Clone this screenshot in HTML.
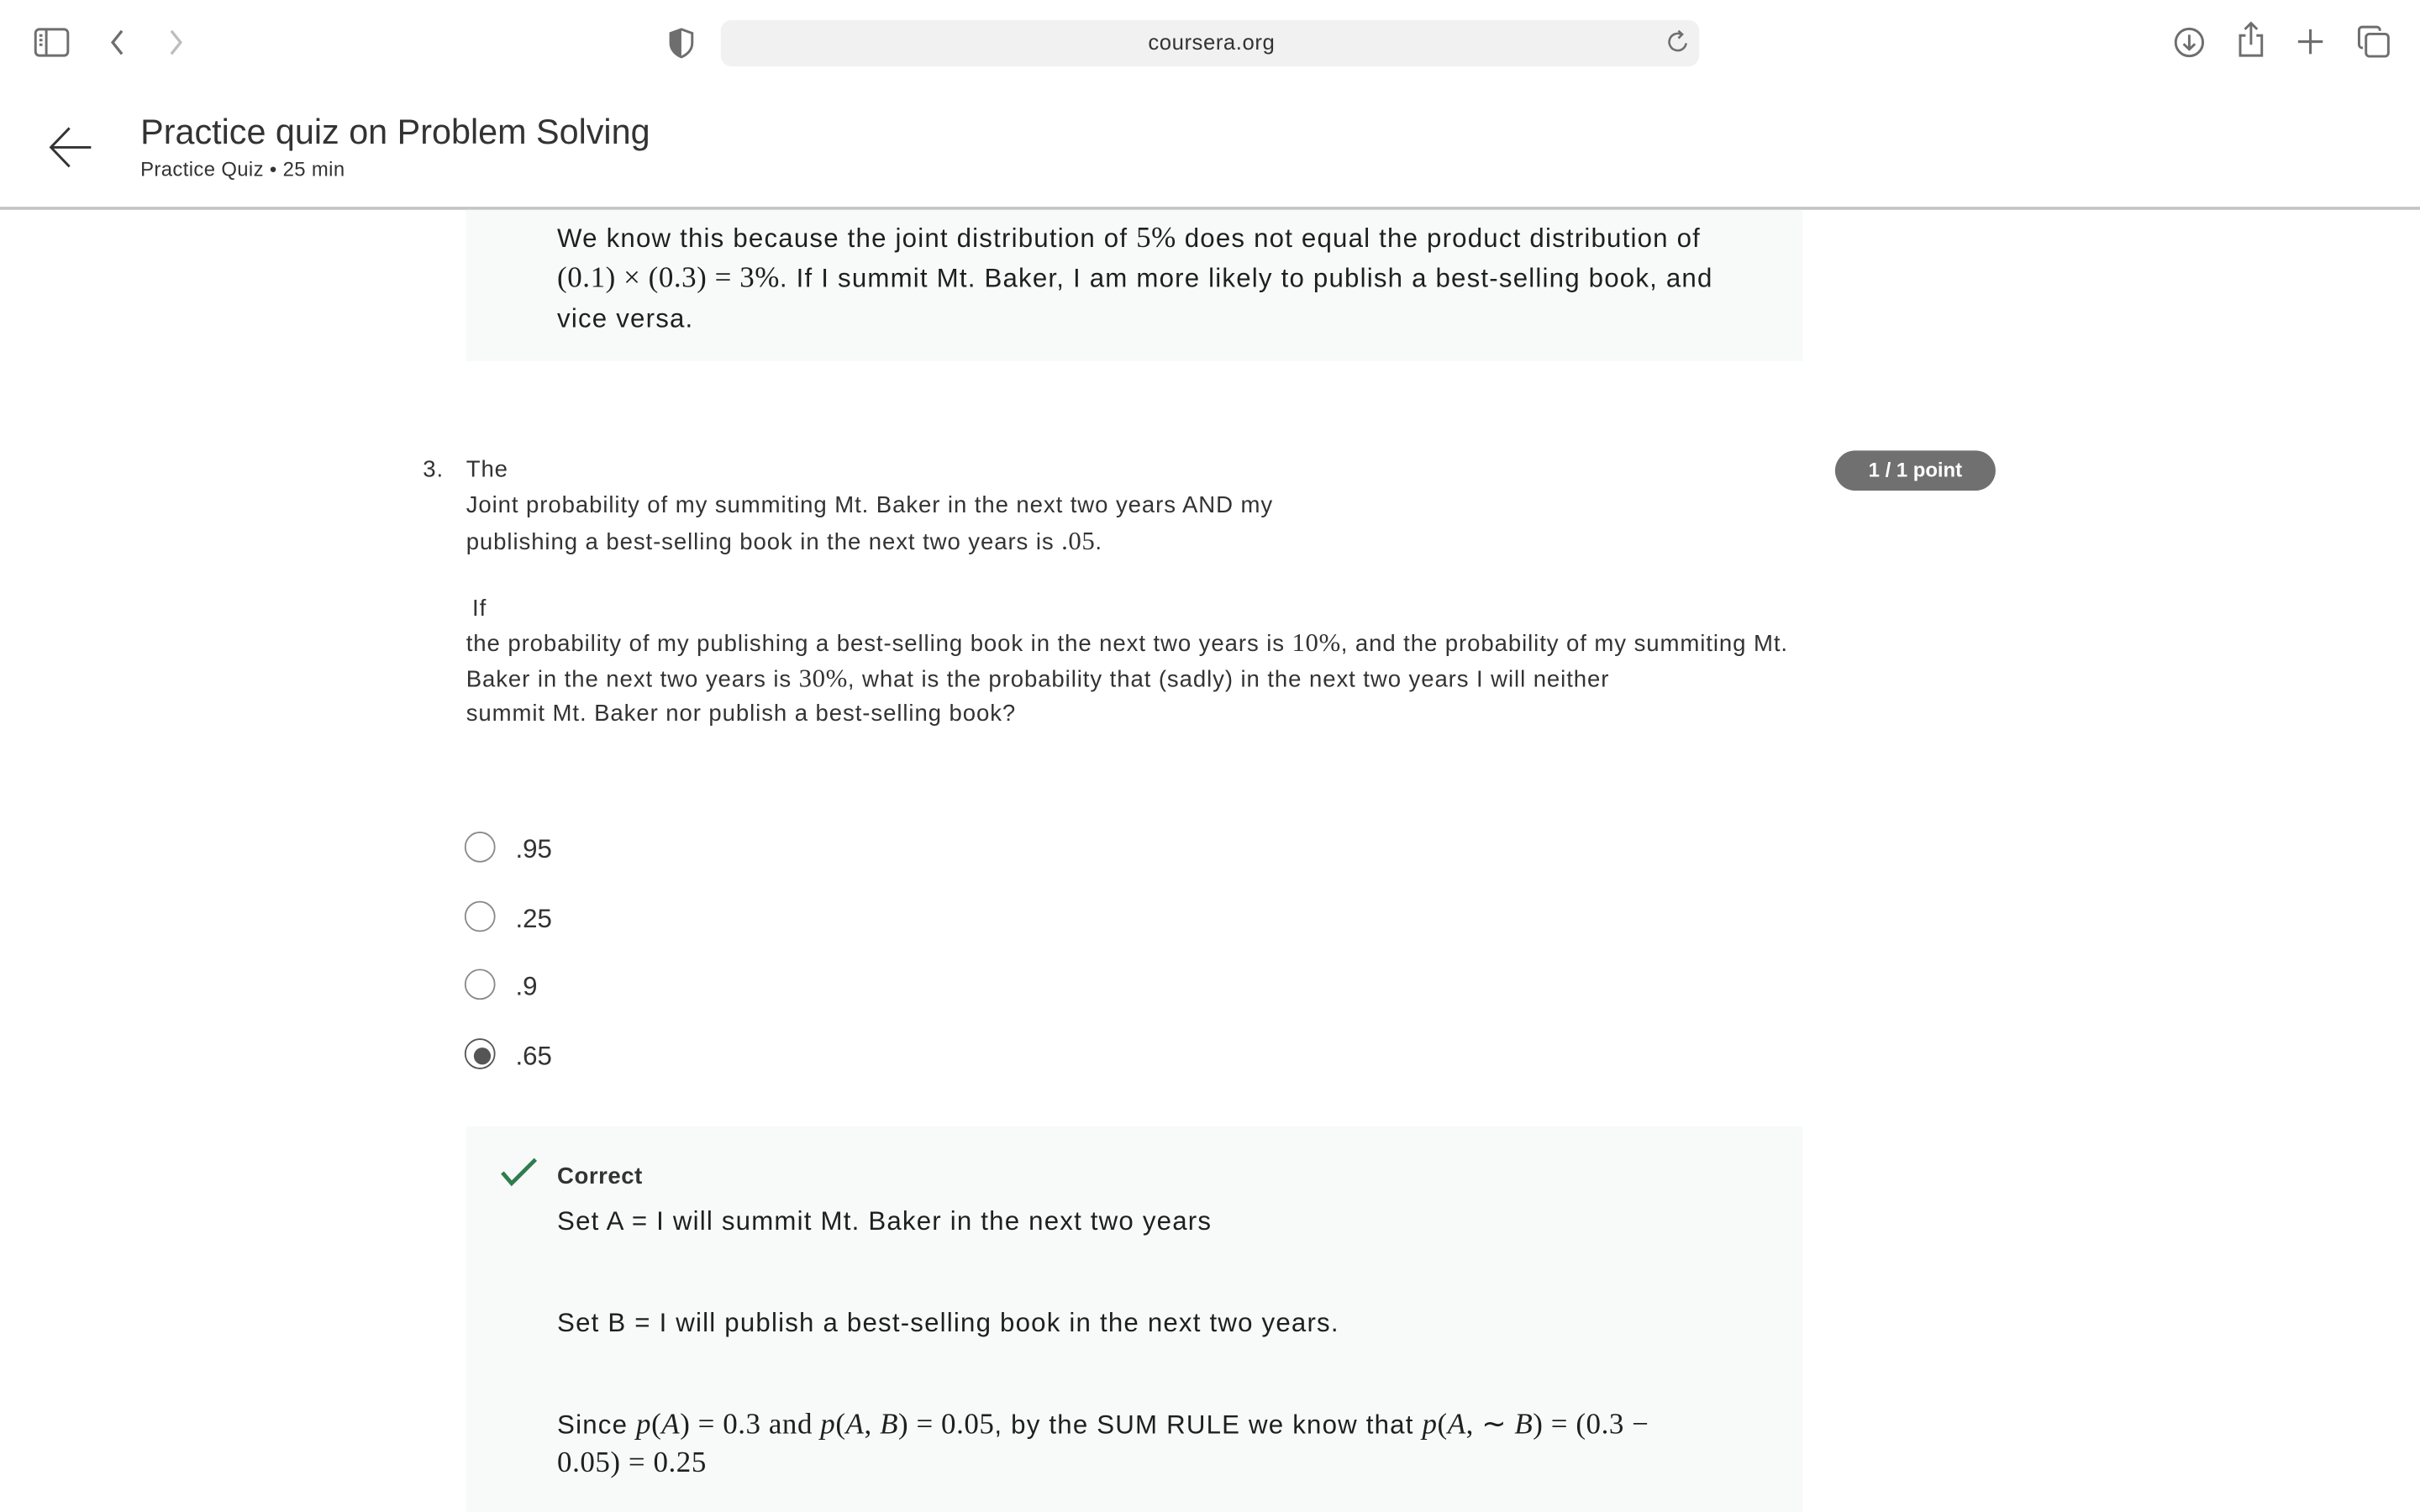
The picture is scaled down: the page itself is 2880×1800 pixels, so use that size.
<!DOCTYPE html>
<html><head><meta charset="utf-8"><style>
html,body{margin:0;padding:0;width:2880px;height:1800px;overflow:hidden;background:#fff}
#w{position:absolute;left:0;top:0;width:1568px;height:980px;transform:scale(1.836735);transform-origin:0 0;font-family:"Liberation Sans",sans-serif;color:#333}
.a{position:absolute;white-space:nowrap}
.m{font-family:"Liberation Serif",serif;font-size:1.12em;letter-spacing:0.3px}
.i{font-style:italic}
.t17{font-size:17px;color:#1f1f1f;letter-spacing:0.65px}
.t15{font-size:15px;color:#333;letter-spacing:0.5px}
.r{position:absolute;left:301px;width:18px;height:18px;border:1.5px solid #8a8a8a;border-radius:50%}
.o{position:absolute;left:334px;font-size:17px;color:#333}
svg{position:absolute}
</style></head><body><div id="w">
<svg style="left:22px;top:18px" width="23" height="19" viewBox="0 0 23 19" fill="none" stroke="#6e6e6e" stroke-width="1.6"><rect x="1" y="1" width="21" height="17" rx="2.5"/><line x1="8" y1="1" x2="8" y2="18"/><line x1="3.5" y1="5" x2="5.5" y2="5"/><line x1="3.5" y1="8" x2="5.5" y2="8"/><line x1="3.5" y1="11" x2="5.5" y2="11"/></svg>
<svg style="left:70px;top:18px" width="12" height="19" viewBox="0 0 12 19" fill="none" stroke="#6e6e6e" stroke-width="1.8"><path d="M9 2L3 9.5L9 17"/></svg>
<svg style="left:108px;top:18px" width="12" height="19" viewBox="0 0 12 19" fill="none" stroke="#bdbdbd" stroke-width="1.8"><path d="M3 2L9 9.5L3 17"/></svg>
<svg style="left:433px;top:18px" width="17" height="20" viewBox="0 0 17 20"><path d="M8.5 1L15.5 3.5V10C15.5 14.5 12 17.5 8.5 19C5 17.5 1.5 14.5 1.5 10V3.5Z" fill="none" stroke="#6e6e6e" stroke-width="1.6"/><path d="M8.5 1L1.5 3.5V10C1.5 14.5 5 17.5 8.5 19Z" fill="#6e6e6e"/></svg>
<div class="a" style="left:467px;top:13px;width:634px;height:30px;background:#f1f1f1;border-radius:7px"></div>
<div class="a" style="left:467px;top:19px;width:636px;text-align:center;font-size:14px;color:#333;letter-spacing:0.3px">coursera.org</div>
<svg style="left:1080px;top:19px" width="15" height="16" viewBox="0 0 15 16" fill="none" stroke="#6e6e6e" stroke-width="1.4"><path d="M12.5 9A5.5 5.5 0 1 1 9.5 3.3"/><path d="M7.5 1L10 3.3L7.5 5.8"/></svg>
<svg style="left:1408px;top:17px" width="21" height="21" viewBox="0 0 21 21" fill="none" stroke="#6e6e6e" stroke-width="1.6"><circle cx="10.5" cy="10.5" r="8.8"/><path d="M10.5 5.5V15M6.8 11.5L10.5 15L14.2 11.5"/></svg>
<svg style="left:1449px;top:13px" width="19" height="25" viewBox="0 0 19 25" fill="none" stroke="#6e6e6e" stroke-width="1.6"><path d="M6 10H2.5V23H16.5V10H13"/><path d="M9.5 2V16M5.5 6L9.5 2L13.5 6"/></svg>
<svg style="left:1488px;top:18px" width="18" height="18" viewBox="0 0 18 18" stroke="#6e6e6e" stroke-width="1.7"><path d="M9 1V17M1 9H17"/></svg>
<svg style="left:1527px;top:16px" width="22" height="22" viewBox="0 0 22 22" fill="none" stroke="#6e6e6e" stroke-width="1.6"><path d="M4 15H3.5A2 2 0 0 1 1.5 13V3.5A2 2 0 0 1 3.5 1.5H13A2 2 0 0 1 15 3.5V4"/><rect x="6" y="6" width="14.5" height="14.5" rx="2.2"/></svg>
<svg style="left:31px;top:81px" width="29" height="29" viewBox="0 0 29 29" fill="none" stroke="#333" stroke-width="1.6"><path d="M28 14.5H2M14 2L2 14.5L14 27"/></svg>
<div class="a" style="left:91px;top:73px;font-size:22.5px;color:#333">Practice quiz on Problem Solving</div>
<div class="a" style="left:91px;top:102px;font-size:13px;color:#333;letter-spacing:0.2px">Practice Quiz • 25 min</div>
<div class="a" style="left:0;top:134px;width:1568px;height:1.5px;background:#c4c4c4"></div>
<div class="a" style="left:302px;top:136px;width:866px;height:98px;background:#f8f9f9"></div>
<div class="a t17" style="left:361px;top:144px">We know this because the joint distribution of <span class="m">5%</span> does not equal the product distribution of</div>
<div class="a t17" style="left:361px;top:170px"><span class="m">(0.1) × (0.3) = 3%</span>. If I summit Mt. Baker, I am more likely to publish a best-selling book, and</div>
<div class="a t17" style="left:361px;top:197px">vice versa.</div>
<div class="a t15" style="left:274px;top:296px">3.</div>
<div class="a t15" style="left:302px;top:296px">The</div>
<div class="a t15" style="left:302px;top:319px">Joint probability of my summiting Mt. Baker in the next two years AND my</div>
<div class="a t15" style="left:302px;top:341px">publishing a best-selling book in the next two years is <span class="m">.05</span>.</div>
<div class="a t15" style="left:306px;top:386px">If</div>
<div class="a t15" style="left:302px;top:407px">the probability of my publishing a best-selling book in the next two years is <span class="m">10%</span>, and the probability of my summiting Mt.</div>
<div class="a t15" style="left:302px;top:430px">Baker in the next two years is <span class="m">30%</span>, what is the probability that (sadly) in the next two years I will neither</div>
<div class="a t15" style="left:302px;top:454px">summit Mt. Baker nor publish a best-selling book?</div>
<div class="a" style="left:1189px;top:292px;width:104px;height:26px;border-radius:13px;background:#707070;color:#fff;font-size:13px;font-weight:bold;text-align:center;line-height:26px">1 / 1 point</div>
<div class="r" style="top:539px"></div><div class="o" style="top:541px">.95</div>
<div class="r" style="top:584px"></div><div class="o" style="top:586px">.25</div>
<div class="r" style="top:628px"></div><div class="o" style="top:630px">.9</div>
<div class="r" style="top:673px;border-color:#555"></div><div class="a" style="left:307px;top:679px;width:11px;height:11px;border-radius:50%;background:#555"></div><div class="o" style="top:675px">.65</div>
<div class="a" style="left:302px;top:730px;width:866px;height:250px;background:#f8f9f9"></div>
<svg style="left:324px;top:750px" width="25" height="20" viewBox="0 0 25 20" fill="none" stroke="#2e7d4f" stroke-width="2.6"><path d="M1.5 10L7.5 17L23 1.5"/></svg>
<div class="a" style="left:361px;top:754px;font-size:15px;font-weight:bold;color:#333;letter-spacing:0.3px">Correct</div>
<div class="a t17" style="left:361px;top:782px">Set A = I will summit Mt. Baker in the next two years</div>
<div class="a t17" style="left:361px;top:848px">Set B = I will publish a best-selling book in the next two years.</div>
<div class="a t17" style="left:361px;top:912px">Since <span class="m"><span class="i">p</span>(<span class="i">A</span>) = 0.3 and <span class="i">p</span>(<span class="i">A</span>, <span class="i">B</span>) = 0.05</span>, by the SUM RULE we know that <span class="m"><span class="i">p</span>(<span class="i">A</span>, ∼ <span class="i">B</span>) = (0.3 −</span></div>
<div class="a t17" style="left:361px;top:938px"><span class="m">0.05) = 0.25</span></div>
</div></body></html>
